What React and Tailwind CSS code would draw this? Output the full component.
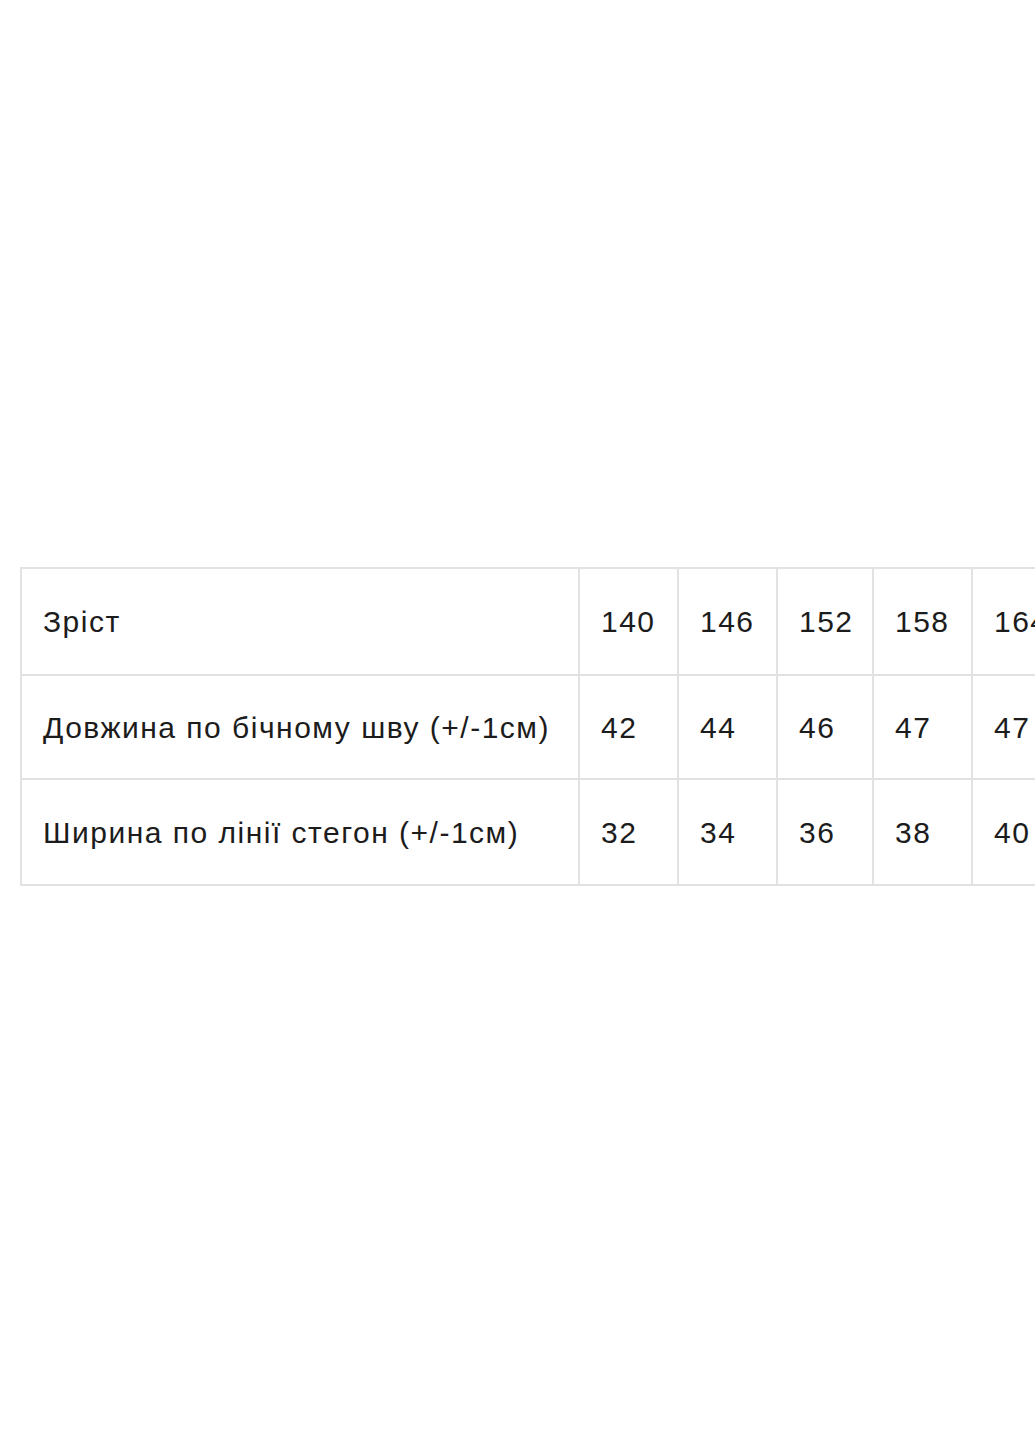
export default function App() {
  const rows = [
    ["Зріст", "140", "146", "152", "158", "164"],
    ["Довжина по бічному шву (+/-1см)", "42", "44", "46", "47", "47"],
    ["Ширина по лінії стегон (+/-1см)", "32", "34", "36", "38", "40"],
  ];
  const widths = ["w-[558px]", "w-[99px]", "w-[99px]", "w-[96px]", "w-[99px]", "w-[99px]"];
  const heights = ["h-[107px]", "h-[104px]", "h-[106px]"];
  return (
    <div className="w-[1035px] h-[1440px] overflow-hidden bg-white" style={{ fontFamily: '"Liberation Sans", Arial, sans-serif' }}>
      <div className="pt-[567px] pl-[20px]">
        <table className="border-collapse table-fixed w-[1050px] text-[30px] tracking-[1.5px] text-[#1c1c1c]">
          <colgroup>
            {widths.map((w, i) => (
              <col key={i} className={w} />
            ))}
          </colgroup>
          <tbody>
            {rows.map((r, ri) => (
              <tr key={ri} className={heights[ri]}>
                {r.map((c, ci) => (
                  <td key={ci} className="border-2 border-[#e2e2e2] pl-[21px] pr-0 align-middle whitespace-nowrap overflow-hidden">
                    {c}
                  </td>
                ))}
              </tr>
            ))}
          </tbody>
        </table>
      </div>
    </div>
  );
}
